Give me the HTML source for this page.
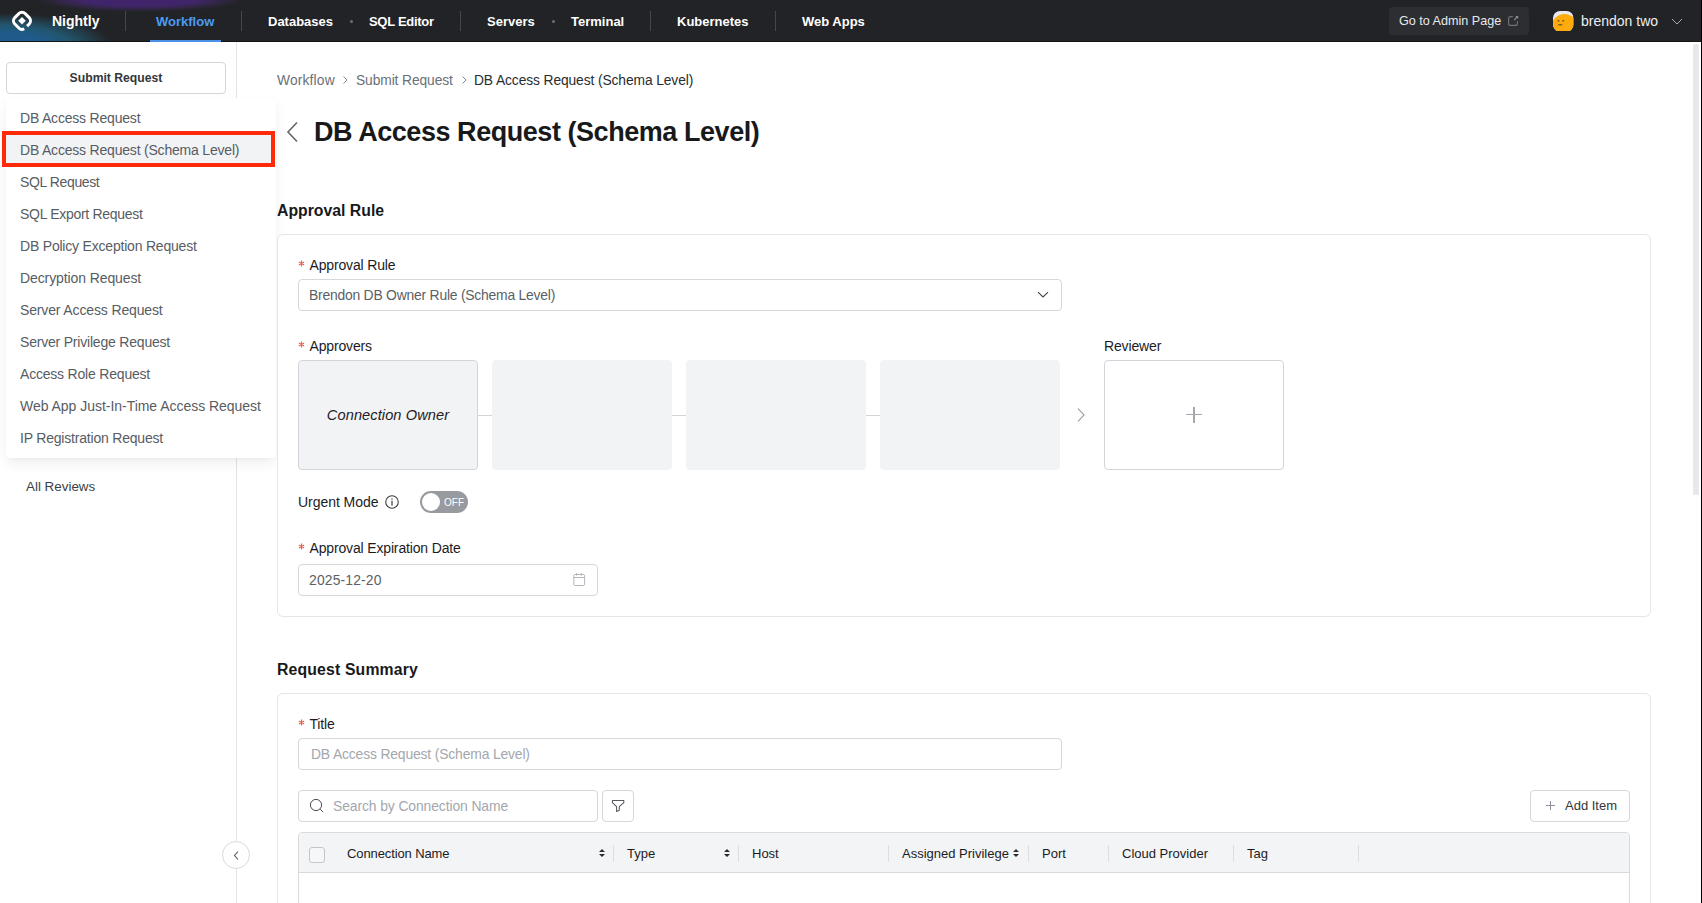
<!DOCTYPE html>
<html><head><meta charset="utf-8">
<style>
*{box-sizing:border-box;margin:0;padding:0}
html,body{width:1702px;height:903px;overflow:hidden;background:#fff;font-family:"Liberation Sans",sans-serif;position:relative}
.a{position:absolute;white-space:nowrap}
#nav{position:absolute;left:0;top:0;width:1702px;height:42px;background:#222326;overflow:hidden}
.nt{position:absolute;top:13.6px;font-size:13px;font-weight:bold;color:#fff;line-height:16px}
.sep{position:absolute;top:11px;width:1px;height:20px;background:#45474b}
.dot{position:absolute;top:20px;width:3px;height:3px;border-radius:2px;background:#6b6e73}
#side{position:absolute;left:0;top:42px;width:237px;height:861px;border-right:1px solid #e3e4e8;background:#fff}
.mi{position:absolute;left:20px;font-size:14px;color:#585c63;letter-spacing:-0.2px;line-height:16px}
.lbl{position:absolute;font-size:14px;color:#1b1c1f;line-height:16px;letter-spacing:-0.15px}
.req{color:#e5533d}
.card{position:absolute;border:1px solid #e5e6ea;border-radius:6px;background:#fff}
.inp{position:absolute;border:1px solid #d5d7dc;border-radius:4px;background:#fff}
.box{position:absolute;width:180px;height:110px;background:#f2f3f5;border-radius:4px}
.th{position:absolute;top:846px;font-size:13px;color:#1b1c1f;line-height:16px}
.cs{position:absolute;top:845px;width:1px;height:17px;background:#dcdee2}
</style></head><body>
<div id="nav">
<div class="a" style="left:0;top:0;width:300px;height:42px;background:radial-gradient(ellipse 112px 32px at 0px 45px,#1f5a8a 0%,#1f5a8a 40%,#22566e 62%,rgba(34,75,95,0.7) 80%,rgba(34,35,38,0) 100%)"></div>
<div class="a" style="left:0;top:0;width:300px;height:42px;background:radial-gradient(ellipse 105px 13px at 140px -1px,#41246b 0%,#40256a 55%,rgba(60,40,90,0.6) 78%,rgba(34,35,38,0) 100%)"></div>
<svg class="a" style="left:10px;top:9px" width="24" height="24" viewBox="0 0 24 24">
<rect x="4.67" y="4.52" width="14.66" height="14.66" rx="4.5" transform="rotate(45 12 11.85)" fill="none" stroke="#fff" stroke-width="3" stroke-dasharray="15.5 4 40"/>
<path d="M12 8 L15.8 11.8 L12 15.6 L8.2 11.8 Z" fill="#fff"/>
</svg>
<div class="nt" style="left:52px;font-size:14px;top:13px">Nightly</div>
<div class="sep" style="left:125px"></div>
<div class="nt" style="left:156px;color:#4c9bf0">Workflow</div>

<div class="sep" style="left:241px"></div>
<div class="nt" style="left:268px">Databases</div>
<div class="dot" style="left:350px"></div>
<div class="nt" style="left:369px;letter-spacing:-0.3px">SQL Editor</div>
<div class="sep" style="left:460px"></div>
<div class="nt" style="left:487px">Servers</div>
<div class="dot" style="left:552px"></div>
<div class="nt" style="left:571px">Terminal</div>
<div class="sep" style="left:650px"></div>
<div class="nt" style="left:677px">Kubernetes</div>
<div class="sep" style="left:775px"></div>
<div class="nt" style="left:802px">Web Apps</div>
<div class="a" style="left:1389px;top:7px;width:140px;height:28px;border-radius:4px;background:#2d2e32"></div>
<div class="nt" style="left:1399px;font-weight:normal;color:#e8e9eb;font-size:12.6px;top:12.7px">Go to Admin Page</div>
<svg class="a" style="left:1507px;top:15px" width="12" height="12" viewBox="0 0 12 12"><path d="M5.8 1.6H3.6Q1.6 1.6 1.6 3.6V8.4Q1.6 10.4 3.6 10.4H8.4Q10.4 10.4 10.4 8.4V6" stroke="#6e7379" stroke-width="1.1" fill="none"/><path d="M7.2 5L10 2.2" stroke="#8a8e93" stroke-width="1.1"/><path d="M8.2 0.9H11.2V3.9Z" fill="#8a8e93"/></svg>
<svg class="a" style="left:1553px;top:10.7px" width="20.5" height="20.5" viewBox="0 0 20.5 20.5"><defs><clipPath id="avc"><rect x="0" y="0" width="20.5" height="20.5" rx="7"/></clipPath></defs><g clip-path="url(#avc)"><rect width="20.5" height="20.5" fill="#e6eaee"/><circle cx="11.5" cy="15.8" r="12.8" fill="#ffab0b"/></g><rect x="4.6" y="9.4" width="1.8" height="1" fill="#1f2a3a"/><rect x="9.4" y="9.4" width="1.8" height="0.9" fill="#1f2a3a"/><rect x="5.3" y="13.4" width="4" height="0.9" fill="#2a3040"/></svg>
<div class="nt" style="left:1581px;font-weight:normal;font-size:14px;color:#eceef0;top:12.6px">brendon two</div>
<svg class="a" style="left:1670px;top:16px" width="14" height="10" viewBox="0 0 14 10"><path d="M2 3L7 8L12 3" fill="none" stroke="#a9abaf" stroke-width="1"/></svg>
<div class="a" style="left:0;top:41px;width:1702px;height:1px;background:#131416"></div>
<div class="a" style="left:150px;top:40px;width:71px;height:2px;background:#4a90e6"></div>
<div class="a" style="left:1701px;top:0;width:1px;height:42px;background:#000"></div>
</div>
<div id="side"></div>
<div class="a" style="left:6px;top:62px;width:220px;height:32px;border:1px solid #d3d5da;border-radius:4px;background:#fff"></div>
<div class="a" style="left:6px;top:70px;width:220px;text-align:center;font-size:12.2px;font-weight:bold;color:#33363b;line-height:16px">Submit Request</div>
<div class="a" style="left:26px;top:479px;font-size:13.4px;color:#3c3f44;line-height:16px">All Reviews</div>
<div class="a" style="left:222px;top:841px;width:28px;height:28px;border:1px solid #d8dade;border-radius:50%;background:#fff"></div>
<svg class="a" style="left:230px;top:849px" width="13" height="13" viewBox="0 0 13 13"><path d="M8 2.5L4.5 6.5L8 10.5" fill="none" stroke="#55585d" stroke-width="1.1"/></svg>
<div class="a" style="left:6px;top:98px;width:270px;height:360px;background:#fff;border-radius:4px;box-shadow:0 6px 14px rgba(0,0,0,0.06),0 3px 6px -4px rgba(0,0,0,0.08)"></div>
<div class="a" style="left:6px;top:135px;width:268px;height:28px;background:#f2f3f5"></div>
<div class="mi" style="top:110px">DB Access Request</div>
<div class="mi" style="top:142px">DB Access Request (Schema Level)</div>
<div class="mi" style="top:174px;letter-spacing:-0.38px">SQL Request</div>
<div class="mi" style="top:206px;letter-spacing:-0.3px">SQL Export Request</div>
<div class="mi" style="top:238px">DB Policy Exception Request</div>
<div class="mi" style="top:270px;letter-spacing:-0.1px">Decryption Request</div>
<div class="mi" style="top:302px;letter-spacing:-0.14px">Server Access Request</div>
<div class="mi" style="top:334px">Server Privilege Request</div>
<div class="mi" style="top:366px">Access Role Request</div>
<div class="mi" style="top:398px;letter-spacing:-0.03px">Web App Just-In-Time Access Request</div>
<div class="mi" style="top:430px">IP Registration Request</div>
<div class="a" style="left:2px;top:131px;width:273px;height:36px;border:4px solid #ff2a0a"></div>

<div id="main">
<div class="a" style="left:277px;top:73px;font-size:13.8px;color:#6c7077;line-height:16px;letter-spacing:0.17px">Workflow</div>
<svg class="a" style="left:341px;top:75px" width="8" height="10" viewBox="0 0 8 10"><path d="M2.5 1.5L6 5L2.5 8.5" fill="none" stroke="#8d9096" stroke-width="1"/></svg>
<div class="a" style="left:356px;top:73px;font-size:13.8px;color:#6c7077;line-height:16px;letter-spacing:-0.1px">Submit Request</div>
<svg class="a" style="left:460px;top:75px" width="8" height="10" viewBox="0 0 8 10"><path d="M2.5 1.5L6 5L2.5 8.5" fill="none" stroke="#8d9096" stroke-width="1"/></svg>
<div class="a" style="left:474px;top:73px;font-size:13.8px;color:#2a2c30;line-height:16px;letter-spacing:-0.1px">DB Access Request (Schema Level)</div>
<svg class="a" style="left:284px;top:120px" width="16" height="24" viewBox="0 0 16 24"><path d="M13 2.5L4 12L13 21.5" fill="none" stroke="#63666b" stroke-width="1.6"/></svg>
<div class="a" style="left:314px;top:115.5px;font-size:27px;font-weight:bold;color:#18191b;line-height:32px;letter-spacing:-0.45px">DB Access Request (Schema Level)</div>
<div class="a" style="left:277px;top:202px;font-size:15.8px;font-weight:bold;color:#18191b;line-height:18px">Approval Rule</div>
<div class="card" style="left:277px;top:234px;width:1374px;height:383px"></div>
<div class="lbl" style="left:299px;top:257px"><svg style="position:absolute;left:-1px;top:2.5px" width="7" height="7" viewBox="0 0 7 7"><path d="M3.5 0.5V6.5M0.9 2L6.1 5M0.9 5L6.1 2" stroke="#ea5f4a" stroke-width="1.1"/></svg><span style="display:inline-block;width:10.45px"></span>Approval Rule</div>
<div class="inp" style="left:298px;top:279px;width:764px;height:32px"></div>
<div class="a" style="left:309px;top:287px;font-size:13.9px;color:#5b5f66;line-height:16px;letter-spacing:-0.22px">Brendon DB Owner Rule (Schema Level)</div>
<svg class="a" style="left:1036px;top:289px" width="14" height="12" viewBox="0 0 14 12"><path d="M2 3.2L7 8L12 3.2" fill="none" stroke="#3f4247" stroke-width="1.05"/></svg>
<div class="lbl" style="left:299px;top:338px"><svg style="position:absolute;left:-1px;top:2.5px" width="7" height="7" viewBox="0 0 7 7"><path d="M3.5 0.5V6.5M0.9 2L6.1 5M0.9 5L6.1 2" stroke="#ea5f4a" stroke-width="1.1"/></svg><span style="display:inline-block;width:10.45px"></span>Approvers</div>
<div class="box" style="left:298px;top:360px;border:1px solid #d3d5da"></div>
<div class="a" style="left:298px;top:406px;width:180px;text-align:center;font-size:14.6px;font-style:italic;color:#1f2023;line-height:18px;letter-spacing:0.09px">Connection Owner</div>
<div class="a" style="left:478px;top:415px;width:14px;height:1px;background:#d3d5da"></div>
<div class="box" style="left:492px;top:360px"></div>
<div class="a" style="left:672px;top:415px;width:14px;height:1px;background:#d3d5da"></div>
<div class="box" style="left:686px;top:360px"></div>
<div class="a" style="left:866px;top:415px;width:14px;height:1px;background:#d3d5da"></div>
<div class="box" style="left:880px;top:360px"></div>
<svg class="a" style="left:1075px;top:406px" width="12" height="18" viewBox="0 0 12 18"><path d="M3 2.5L9 9L3 15.5" fill="none" stroke="#8d9096" stroke-width="1.1"/></svg>
<div class="lbl" style="left:1104px;top:338px">Reviewer</div>
<div class="a" style="left:1104px;top:360px;width:180px;height:110px;border:1px solid #d3d5da;border-radius:4px;background:#fff"></div>
<div class="a" style="left:1186px;top:414px;width:16px;height:1.4px;background:#a3a6ab"></div>
<div class="a" style="left:1193.3px;top:407px;width:1.4px;height:16px;background:#a3a6ab"></div>
<div class="lbl" style="left:298px;top:494px;letter-spacing:-0.05px">Urgent Mode</div>
<svg class="a" style="left:384px;top:494px" width="16" height="16" viewBox="0 0 16 16"><circle cx="8" cy="8" r="6.3" fill="none" stroke="#3a3c40" stroke-width="1.1"/><rect x="7.4" y="4.3" width="1.2" height="1.3" fill="#3a3c40"/><rect x="7.4" y="6.7" width="1.2" height="5" fill="#3a3c40"/></svg>
<div class="a" style="left:420px;top:491px;width:48px;height:22px;border-radius:11px;background:#979a9f"></div>
<div class="a" style="left:422px;top:493px;width:18px;height:18px;border-radius:50%;background:#fff"></div>
<div class="a" style="left:444px;top:497px;font-size:10px;color:#fff;line-height:12px">OFF</div>
<div class="lbl" style="left:299px;top:540px"><svg style="position:absolute;left:-1px;top:2.5px" width="7" height="7" viewBox="0 0 7 7"><path d="M3.5 0.5V6.5M0.9 2L6.1 5M0.9 5L6.1 2" stroke="#ea5f4a" stroke-width="1.1"/></svg><span style="display:inline-block;width:10.45px"></span>Approval Expiration Date</div>
<div class="inp" style="left:298px;top:564px;width:300px;height:32px"></div>
<div class="a" style="left:309px;top:572px;font-size:13.9px;color:#5b5f66;line-height:16px;letter-spacing:0.15px">2025-12-20</div>
<svg class="a" style="left:571px;top:571px" width="16" height="16" viewBox="0 0 16 16"><rect x="2.8" y="3.5" width="10.8" height="11" rx="1.2" fill="none" stroke="#b3b7bc" stroke-width="1"/><path d="M2.8 6.5H13.6M5.5 2V4.6M10.5 2V4.6" stroke="#b3b7bc" stroke-width="1"/></svg>
<div class="a" style="left:277px;top:661px;font-size:15.8px;font-weight:bold;color:#18191b;line-height:18px;letter-spacing:0.15px">Request Summary</div>
<div class="card" style="left:277px;top:693px;width:1374px;height:260px"></div>
<div class="lbl" style="left:299px;top:716px"><svg style="position:absolute;left:-1px;top:2.5px" width="7" height="7" viewBox="0 0 7 7"><path d="M3.5 0.5V6.5M0.9 2L6.1 5M0.9 5L6.1 2" stroke="#ea5f4a" stroke-width="1.1"/></svg><span style="display:inline-block;width:10.45px"></span>Title</div>
<div class="inp" style="left:298px;top:738px;width:764px;height:32px"></div>
<div class="a" style="left:311px;top:746px;font-size:13.9px;color:#a4a7ad;line-height:16px;letter-spacing:-0.16px">DB Access Request (Schema Level)</div>
<div class="inp" style="left:298px;top:790px;width:300px;height:32px"></div>
<svg class="a" style="left:308px;top:797px" width="18" height="18" viewBox="0 0 18 18"><circle cx="8" cy="8" r="5.6" fill="none" stroke="#4a4d52" stroke-width="1"/><path d="M12.2 12.2L15.2 15.2" stroke="#4a4d52" stroke-width="1"/></svg>
<div class="a" style="left:333px;top:798px;font-size:13.9px;color:#a4a7ad;line-height:16px;letter-spacing:-0.1px">Search by Connection Name</div>
<div class="inp" style="left:602px;top:790px;width:32px;height:32px"></div>
<svg class="a" style="left:610px;top:798px" width="16" height="16" viewBox="0 0 16 16"><path d="M2.4 2.5H13.8V4.6L9.3 8.6V12.3L6.6 13.5V8.6L2.4 4.6Z" fill="none" stroke="#55585d" stroke-width="1.05" stroke-linejoin="round"/></svg>
<div class="inp" style="left:1530px;top:790px;width:100px;height:32px"></div>
<div class="a" style="left:1546px;top:805px;width:9px;height:1px;background:#8d9096"></div>
<div class="a" style="left:1550px;top:801px;width:1px;height:9px;background:#8d9096"></div>
<div class="a" style="left:1565px;top:798px;font-size:13px;color:#33363b;line-height:16px">Add Item</div>
<div class="a" style="left:298px;top:832px;width:1332px;height:100px;border:1px solid #d8dade;border-radius:4px 4px 0 0;background:#fff"></div>
<div class="a" style="left:299px;top:833px;width:1330px;height:40px;background:#f3f4f6;border-bottom:1px solid #d8dade;border-radius:3px 3px 0 0"></div>
<div class="a" style="left:309px;top:847px;width:16px;height:16px;border:1px solid #c4c6cb;border-radius:3px;background:#f6f7f9"></div>
<div class="th" style="left:347px;letter-spacing:-0.11px">Connection Name</div>
<div class="th" style="left:627px">Type</div>
<div class="th" style="left:752px">Host</div>
<div class="th" style="left:902px">Assigned Privilege</div>
<div class="th" style="left:1042px">Port</div>
<div class="th" style="left:1122px">Cloud Provider</div>
<div class="th" style="left:1247px">Tag</div>
<div class="cs" style="left:612.5px"></div>
<div class="cs" style="left:738px"></div>
<div class="cs" style="left:888px"></div>
<div class="cs" style="left:1028px"></div>
<div class="cs" style="left:1108px"></div>
<div class="cs" style="left:1233px"></div>
<div class="cs" style="left:1358px"></div>
<svg class="a" style="left:598px;top:847px" width="8" height="12" viewBox="0 0 8 12"><path d="M1 5L4 2L7 5Z M1 7L4 10L7 7Z" fill="#2a2c30"/></svg><svg class="a" style="left:723px;top:847px" width="8" height="12" viewBox="0 0 8 12"><path d="M1 5L4 2L7 5Z M1 7L4 10L7 7Z" fill="#2a2c30"/></svg><svg class="a" style="left:1012px;top:847px" width="8" height="12" viewBox="0 0 8 12"><path d="M1 5L4 2L7 5Z M1 7L4 10L7 7Z" fill="#2a2c30"/></svg>
<div class="a" style="left:1693px;top:44px;width:6px;height:451px;border-radius:1.5px;background:#e6e8eb"></div>
<div class="a" style="left:1701px;top:0;width:1px;height:903px;background:#000"></div>
</div>
</body></html>
